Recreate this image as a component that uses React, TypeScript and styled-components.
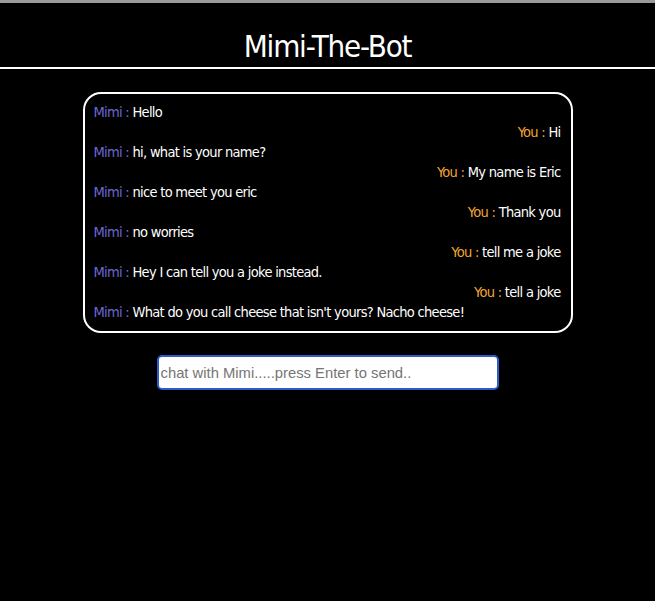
import React from "react";
import styled, { createGlobalStyle } from "styled-components";

const Global = createGlobalStyle`
  html, body { margin: 0; padding: 0; background: #000; }
  body { font-family: "DejaVu Sans Condensed", "DejaVu Sans", sans-serif; font-stretch: condensed; }
`;

const Page = styled.div`
  min-height: 601px;
  background: #000;
  border-top: 3px solid #9a9a9a;
  display: flex;
  flex-direction: column;
  align-items: center;
`;

const Header = styled.header`
  align-self: stretch;
  border-bottom: 2px solid #fff;
  padding: 24px 0 2px;
  text-align: center;
`;

const Title = styled.h1`
  margin: 0;
  color: #fff;
  font-weight: normal;
  font-size: 31px;
  line-height: 38px;
  letter-spacing: -1.2px;
`;

const ChatBox = styled.div`
  box-sizing: border-box;
  width: 490px;
  height: 241px;
  margin-top: 23px;
  border: 2px solid #fff;
  border-radius: 18px;
  padding: 8px 10px 9px 9px;
  display: flex;
  flex-direction: column;
`;

const Row = styled.div<{ $mine?: boolean }>`
  height: 20px;
  line-height: 20px;
  font-size: 14.5px;
  letter-spacing: -0.7px;
  color: #fff;
  text-align: ${(p) => (p.$mine ? "right" : "left")};
  white-space: nowrap;
`;

const Who = styled.span<{ $mine?: boolean }>`
  color: ${(p) => (p.$mine ? "#f2a630" : "#6c68d6")};
`;

const Input = styled.input`
  box-sizing: border-box;
  width: 342px;
  height: 35px;
  margin-top: 22px;
  border: 2px solid #2a5ccb;
  border-radius: 5px;
  background: #fff;
  padding: 0 2px;
  font-family: "Liberation Sans", Arial, sans-serif;
  font-size: 14.8px;
  outline: none;
  &::placeholder { color: #757575; }
`;

const messages: { mine: boolean; text: string }[] = [
  { mine: false, text: "Hello" },
  { mine: true, text: "Hi" },
  { mine: false, text: "hi, what is your name?" },
  { mine: true, text: "My name is Eric" },
  { mine: false, text: "nice to meet you eric" },
  { mine: true, text: "Thank you" },
  { mine: false, text: "no worries" },
  { mine: true, text: "tell me a joke" },
  { mine: false, text: "Hey I can tell you a joke instead." },
  { mine: true, text: "tell a joke" },
  { mine: false, text: "What do you call cheese that isn't yours? Nacho cheese!" },
];

export default function App() {
  return (
    <>
      <Global />
      <Page>
        <Header>
          <Title>Mimi-The-Bot</Title>
        </Header>
        <ChatBox>
          {messages.map((m, i) => (
            <Row key={i} $mine={m.mine}>
              <Who $mine={m.mine}>{m.mine ? "You : " : "Mimi : "}</Who>
              {m.text}
            </Row>
          ))}
        </ChatBox>
        <Input placeholder="chat with Mimi.....press Enter to send.." />
      </Page>
    </>
  );
}
